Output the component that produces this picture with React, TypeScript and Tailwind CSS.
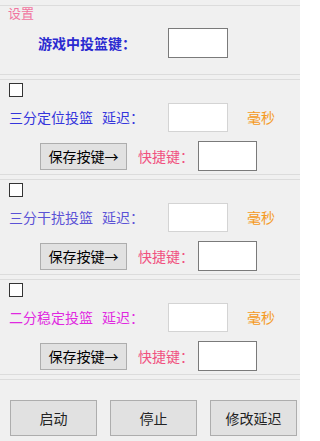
const font = { fontFamily: '"Noto Sans CJK SC", "Noto Sans", sans-serif' }

type Sec = { name: string; color: string }

const sections: Sec[] = [
  { name: '三分定位投篮', color: 'text-[#3535dc]' },
  { name: '三分干扰投篮', color: 'text-[#5b52d6]' },
  { name: '二分稳定投篮', color: 'text-[#e028e0]' },
]

function ShotSection({ sec }: { sec: Sec }) {
  return (
    <div className="mt-[4px] h-[96px] border-y border-[#dcdcdc] pt-[3px]">
      <div className="ml-[9px] h-[14px] w-[14px] border border-[#333] bg-white" />
      <div className="mt-[5px] flex h-[30px] items-center">
        <span className={`w-[168px] pl-[9px] text-[14px] leading-none ${sec.color}`}>
          {sec.name}
          <span className="ml-[9px]">延迟：</span>
        </span>
        <div className="h-[29px] w-[60px] border border-[#d4d4d4] bg-white" />
        <span className="ml-[19px] text-[14px] leading-none text-[#f59a23]">毫秒</span>
      </div>
      <div className="mt-[9px] flex h-[30px] items-center">
        <button className="ml-[40px] flex h-[27px] w-[87px] items-center justify-center border border-[#adadad] bg-[#e1e1e1] text-[14px] leading-none text-black">
          保存按键→
        </button>
        <span className="w-[71px] pl-[11px] text-[14px] leading-none text-[#f0507f]">快捷键：</span>
        <div className="h-[30px] w-[59px] border border-[#7a7a7a] bg-white" />
      </div>
    </div>
  )
}

export default function App() {
  return (
    <div className="h-[441px] w-[300px] overflow-hidden bg-[#f0f0f0]" style={font}>
      {/* 设置 */}
      <div className="mt-[5px] h-[70px] border-y border-[#dcdcdc]">
        <div className="pl-[8px] text-[13px] leading-[14px] text-[#f075a0]">设置</div>
        <div className="mt-[8px] flex h-[30px] items-center">
          <span className="w-[168px] pl-[38px] text-[14px] font-bold leading-none text-[#2a2ad0]">
            游戏中投篮键：
          </span>
          <div className="h-[30px] w-[60px] border border-[#7a7a7a] bg-white" />
        </div>
      </div>

      {sections.map((s) => (
        <ShotSection key={s.name} sec={s} />
      ))}

      {/* buttons */}
      <div className="mt-[4px] h-[70px] border-t border-[#dcdcdc]">
        <div className="mt-[20px] flex gap-[13px] pl-[10px]">
          {['启动', '停止', '修改延迟'].map((t) => (
            <button
              key={t}
              className="flex h-[36px] w-[87px] items-center justify-center border border-[#adadad] bg-[#e1e1e1] text-[14px] leading-none text-[#222]"
            >
              {t}
            </button>
          ))}
        </div>
      </div>
    </div>
  )
}
